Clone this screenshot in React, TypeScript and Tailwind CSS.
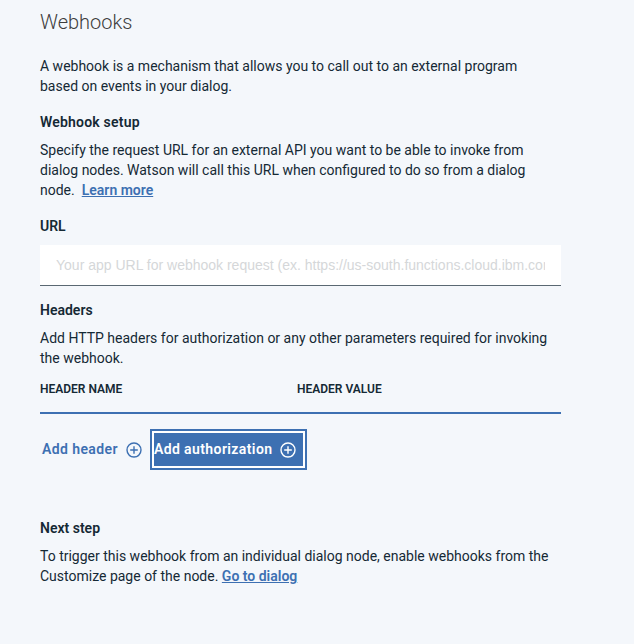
const FONT = { fontFamily: 'Roboto, "Noto Sans", sans-serif' };

function PlusCircle({ className }: { className?: string }) {
  return (
    <svg viewBox="0 0 16 16" width="16" height="16" className={className} fill="none" stroke="currentColor" strokeWidth="1.4">
      <circle cx="8" cy="8" r="7" />
      <path d="M8 4.2v7.6M4.2 8h7.6" />
    </svg>
  );
}

export default function App() {
  return (
    <div className="min-h-[644px] w-full bg-[#f4f7fb] text-[#152935]" style={FONT}>
      <div className="w-[561px] pl-10 pt-[8px]">
        <h1 className="text-[20px] leading-[28px] font-light text-[#3d3d3d]">Webhooks</h1>
        <p className="mt-[20px] text-[14px] leading-[20px]">
          A webhook is a mechanism that allows you to call out to an external program
          <br />
          based on events in your dialog.
        </p>

        <h2 className="mt-[16px] text-[14px] leading-[20px] font-semibold tracking-[0.2px]">Webhook setup</h2>
        <p className="mt-[8px] text-[14px] leading-[20px]">
          Specify the request URL for an external API you want to be able to invoke from
          <br />
          dialog nodes. Watson will call this URL when configured to do so from a dialog
          <br />
          node.
          <a href="#" className="ml-[7px] font-semibold text-[#3d70b2] underline">Learn more</a>
        </p>

        <h2 className="mt-[16px] text-[14px] leading-[20px] font-semibold">URL</h2>
        <input
          type="text"
          placeholder="Your app URL for webhook request (ex. https://us-south.functions.cloud.ibm.com/api/v1/web/namespace/default/webhook)"
          className="mt-[9px] block h-[41px] w-full bg-white border-b border-[#5a6872] px-4 text-[14px] outline-none placeholder:text-[#d5d7d9]"
          style={{ fontFamily: '"Liberation Sans", Arial, sans-serif' }}
        />

        <h2 className="mt-[14px] text-[14px] leading-[20px] font-semibold">Headers</h2>
        <p className="mt-[8px] text-[14px] leading-[20px]">
          Add HTTP headers for authorization or any other parameters required for invoking
          <br />
          the webhook.
        </p>

        <div className="mt-[13px] flex text-[12px] leading-[16px] font-semibold uppercase">
          <div className="w-[257px]">Header name</div>
          <div>Header value</div>
        </div>
        <div className="mt-[15px] h-[2px] bg-[#3d70b2]" />

        <div className="mt-[15px] flex items-center">
          <button type="button" className="ml-[2px] flex items-center gap-2 text-[14px] font-semibold tracking-[0.4px] text-[#3d70b2]">
            Add header
            <PlusCircle />
          </button>
          <button
            type="button"
            className="ml-[8px] flex h-[41px] items-center gap-2 border-2 border-[#3d70b2] bg-[#3d70b2] pl-[2px] pr-[9px] text-[14px] font-semibold tracking-[0.4px] text-white shadow-[inset_0_0_0_2px_white]"
          >
            Add authorization
            <PlusCircle />
          </button>
        </div>

        <h2 className="mt-[48px] text-[14px] leading-[20px] font-semibold">Next step</h2>
        <p className="mt-[8px] text-[14px] leading-[20px]">
          To trigger this webhook from an individual dialog node, enable webhooks from the
          <br />
          Customize page of the node.{" "}
          <a href="#" className="font-semibold text-[#3d70b2] underline">Go to dialog</a>
        </p>
      </div>
    </div>
  );
}
